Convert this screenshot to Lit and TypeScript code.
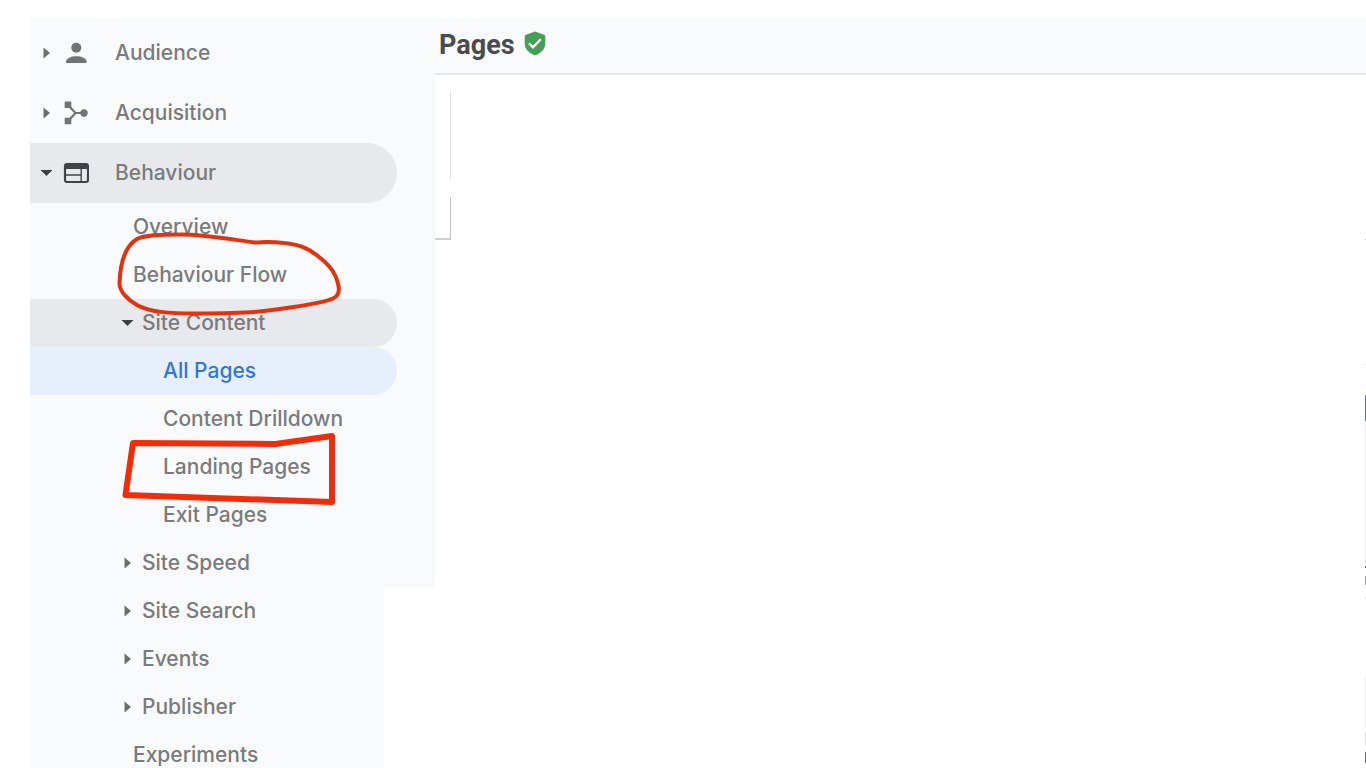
import { LitElement, html, css, svg, nothing } from "lit";
import { customElement } from "lit/decorators.js";
import { classMap } from "lit/directives/class-map.js";

type Entry = {
  label: string;
  level: "top" | "plain" | "group" | "leaf";
  icon?: "person" | "merge" | "web";
  arrow?: "closed" | "open";
  shaded?: boolean;
  current?: boolean;
};

const ENTRIES: Entry[] = [
  { label: "Audience", level: "top", icon: "person", arrow: "closed" },
  { label: "Acquisition", level: "top", icon: "merge", arrow: "closed" },
  { label: "Behaviour", level: "top", icon: "web", arrow: "open", shaded: true },
  { label: "Overview", level: "plain" },
  { label: "Behaviour Flow", level: "plain" },
  { label: "Site Content", level: "group", arrow: "open", shaded: true },
  { label: "All Pages", level: "leaf", current: true },
  { label: "Content Drilldown", level: "leaf" },
  { label: "Landing Pages", level: "leaf" },
  { label: "Exit Pages", level: "leaf" },
  { label: "Site Speed", level: "group", arrow: "closed" },
  { label: "Site Search", level: "group", arrow: "closed" },
  { label: "Events", level: "group", arrow: "closed" },
  { label: "Publisher", level: "group", arrow: "closed" },
  { label: "Experiments", level: "plain" },
];

const ICONS = {
  person: svg`<circle cx="13.300" cy="7.800" r="5"/><path d="M3.100 23v-1.400c0-3.400 5.200-5.400 10.200-5.400s10.200 2 10.200 5.400V23z"/>`,
  merge: svg`<path d="M1.700 1.500h6.600v6.600H1.700zM1.700 17.700h6.600v6.600H1.700z"/><circle cx="21" cy="13" r="3.700"/><path d="M5 5l7.500 8L5 21M12.500 13H21" fill="none" stroke="currentColor" stroke-width="2.200"/>`,
  web: svg`<rect x="2" y="4.200" width="23" height="17.800" rx="2" fill="none" stroke="currentColor" stroke-width="2.200"/><path d="M2 4h23v5H2z"/><path d="M3 15h15M18.200 9v13" fill="none" stroke="currentColor" stroke-width="1.400"/>`,
};

@customElement("app-root")
export class AppRoot extends LitElement {
  static styles = css`
    :host {
      display: flex;
      box-sizing: border-box;
      height: 100vh;
      padding: 18px 0 0 30px;
      overflow: hidden;
      background: #fff;
      font-family: Inter, "Noto Sans", sans-serif;
    }
    .side {
      position: relative;
      flex: none;
      width: 405px;
      padding-top: 5px;
      box-sizing: border-box;
      background: #f9fafc;
    }
    .list {
      margin: 0;
      padding: 0;
      list-style: none;
    }
    .row {
      display: flex;
      align-items: center;
      box-sizing: border-box;
      height: 48px;
      margin-right: 38px;
      border-radius: 0 24px 24px 0;
      color: #7a7b7d;
      font-size: 21px;
      font-weight: 500;
      line-height: 24px;
      text-decoration: none;
      white-space: nowrap;
    }
    .top {
      height: 60px;
      padding-left: 10px;
      border-radius: 0 30px 30px 0;
    }
    .plain { padding-left: 103px; }
    .group { padding-left: 91px; }
    .leaf { padding-left: 133px; }
    .shaded { background: #e8e9ec; }
    .current {
      background: #e8effc;
      color: #2f78d9;
    }
    .arrow {
      flex: none;
      width: 12px;
      height: 12px;
      margin-right: 9px;
      fill: #6c6d6f;
    }
    .top .arrow { margin-right: 11px; }
    .arrow.open { fill: #3c4043; }
    .icon {
      flex: none;
      width: 26px;
      height: 26px;
      margin-right: 26px;
      color: #727375;
      fill: currentColor;
    }
    .shaded .icon { color: #404347; }
    .blank {
      position: absolute;
      top: 569px;
      right: 0;
      bottom: 0;
      width: 51px;
      background: #fff;
    }
    .marks {
      position: absolute;
      top: 0;
      left: 0;
      fill: none;
      stroke-linejoin: round;
      stroke-linecap: round;
      pointer-events: none;
    }
    .loop { stroke: #e23311; }
    .box { stroke: #f22c08; }
    .main {
      position: relative;
      flex: 1;
      min-width: 0;
    }
    .head {
      display: flex;
      align-items: flex-start;
      gap: 9px;
      box-sizing: border-box;
      height: 57px;
      padding: 11px 0 0 4px;
      border-bottom: 2px solid #e6e8ea;
      background: #f9fafc;
    }
    .title {
      margin: 0;
      color: #4a4b4d;
      font-family: Roboto, sans-serif;
      font-size: 27px;
      font-weight: 700;
      line-height: 32px;
    }
    .shield {
      width: 22px;
      height: 28px;
    }
    .panel, .foot {
      box-sizing: border-box;
      width: 16px;
      border-right: 1px solid #e2e2e3;
    }
    .panel {
      height: 88px;
      margin-top: 16px;
    }
    .foot {
      height: 43px;
      margin-top: 18px;
      border-right-color: #c2c2c3;
      border-bottom: 2px solid #cfcfd0;
    }
    .edge {
      position: absolute;
      top: 0;
      right: 0;
    }
  `;

  private arrow(kind: "closed" | "open") {
    return html`<svg class="arrow ${kind}" viewBox="0 0 12 12" aria-hidden="true">
      ${kind === "open" ? svg`<path d="M.5 3h12L6.500 9z"/>` : svg`<path d="M3.500.5v11l6.500-5.500z"/>`}
    </svg>`;
  }

  private row(e: Entry) {
    const classes = {
      row: true,
      [e.level]: true,
      shaded: !!e.shaded,
      current: !!e.current,
    };
    return html`<li>
      <a class=${classMap(classes)} href="#" aria-current=${e.current ? "page" : nothing}>
        ${e.arrow ? this.arrow(e.arrow) : nothing}
        ${e.icon
          ? html`<svg class="icon" viewBox="0 0 26 26" aria-hidden="true">${ICONS[e.icon]}</svg>`
          : nothing}
        <span>${e.label}</span>
      </a>
    </li>`;
  }

  render() {
    return html`
      <nav class="side" aria-label="Reports">
        <ul class="list">${ENTRIES.map((e) => this.row(e))}</ul>
        <div class="blank"></div>
        <svg class="marks" width="405" height="569" viewBox="30 18 405 569" aria-hidden="true">
          <path class="loop" stroke-width="4" d="M255 242.500C235 240 205 234.500 182 234.500C160 234.500 144 235 137 239C124 247 120 264 119.500 284C120 292 128 300 137 305C149 312 168 313.500 198 313.500C225 313.500 247 313 264 311C292 307.500 324 303 333 298.500C338 296 339.500 291 338.500 286C336 271 326 261 310 250.500C298 243 282 242.500 268 242C262 241.500 260 243 255 242.500"/>
          <path class="box" stroke-width="6" d="M133 443L275.500 444L332 436V502L125.500 495Z"/>
        </svg>
      </nav>
      <main class="main">
        <header class="head">
          <h1 class="title">Pages</h1>
          <svg class="shield" viewBox="0 0 22 28" role="img" aria-label="Verified">
            <path d="M11 2.500l9 3.200q1.300.500 1.300 2v6.300c0 6-4.500 10.800-10.300 12.300C5.200 24.800.700 20 .700 14V7.700q0-1.500 1.300-2z" fill="#459f57"/>
            <path d="M5 14.300l4 4 7.800-8" fill="none" stroke="#fff" stroke-width="2.300"/>
          </svg>
        </header>
        <div class="panel"></div>
        <div class="foot"></div>
        <svg class="edge" width="1" height="750" viewBox="0 18 1 750" aria-hidden="true">
          <rect y="239" width="1" height="1" fill="#b8b8b8"/>
          <rect y="364" width="1" height="1" fill="#e6e6e6"/>
          <rect y="395" width="1" height="26" fill="#4e8a92"/>
          <rect y="421" width="1" height="143" fill="#eeeff0"/>
          <rect y="566" width="1" height="2" fill="#666"/>
          <rect y="576" width="1" height="9" fill="#999"/>
          <rect y="597" width="1" height="2" fill="#ddd"/>
          <rect y="676" width="1" height="52" fill="#eee"/>
          <rect y="732" width="1" height="14" fill="#ddd"/>
          <rect y="752" width="1" height="11" fill="#777"/>
        </svg>
      </main>
    `;
  }
}
